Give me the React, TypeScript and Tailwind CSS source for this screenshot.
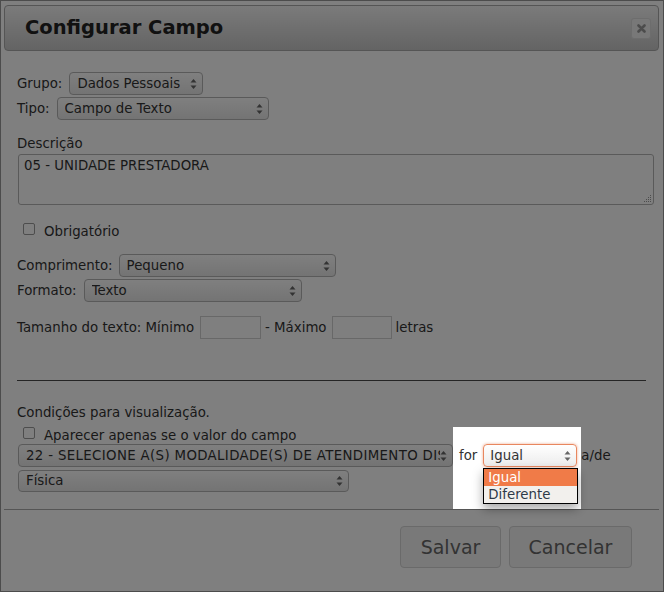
import React from "react";

function Arrows() {
  return (
    <svg width="7" height="12" viewBox="0 0 7 12" className="shrink-0">
      <path d="M0.5 4.5 L3.5 1 L6.5 4.5 Z" fill="#666" />
      <path d="M0.5 7.5 L3.5 11 L6.5 7.5 Z" fill="#666" />
    </svg>
  );
}

function Sel({
  text,
  className,
  textClass = "",
}: {
  text: string;
  className: string;
  textClass?: string;
}) {
  return (
    <div
      className={
        "flex items-center justify-between rounded-[4px] border border-[#b4b4b4] bg-gradient-to-b from-[#ffffff] to-[#e8e8e8] pl-[7px] pr-[5px] overflow-hidden whitespace-nowrap " +
        className
      }
    >
      <span className={"overflow-hidden " + textClass}>{text}</span>
      <Arrows />
    </div>
  );
}

function Check() {
  return (
    <div className="w-[12px] h-[12px] shrink-0 rounded-[2px] border border-[#9a9a9a] bg-white" />
  );
}

export default function App() {
  return (
    <div className="relative w-[664px] h-[592px] overflow-hidden bg-white font-['DejaVu_Sans',sans-serif] text-[13.333px] leading-[16px] text-[#333]">
      <div className="h-full border border-[#999] flex flex-col pt-[4px] pl-[3px] pr-[4px]">
        {/* Header */}
        <div className="h-[46px] shrink-0 rounded-[4px] border border-[#aaa] bg-gradient-to-b from-[#f6f6f6] to-[#c8c8c8] flex items-center justify-between pl-[20px] pr-[7px]">
          <span className="text-[19.5px] leading-[24px] font-bold text-[#222]">
            Configurar Campo
          </span>
          <div className="w-[20px] h-[21px] rounded-[3px] bg-[#f0f0f0] border border-[#dadada] flex items-center justify-center">
            <svg width="9" height="9" viewBox="0 0 9 9">
              <path
                d="M1.5 1.5 L7.5 7.5 M7.5 1.5 L1.5 7.5"
                stroke="#999"
                strokeWidth="2.6"
                strokeLinecap="round"
              />
            </svg>
          </div>
        </div>

        {/* Body */}
        <div className="pl-[13px] flex flex-col">
          <div className="mt-[21px] flex items-center">
            <span>Grupo:</span>
            <Sel text="Dados Pessoais" className="ml-[7px] w-[134px] h-[23px]" />
          </div>
          <div className="mt-[2px] flex items-center">
            <span>Tipo:</span>
            <Sel text="Campo de Texto" className="ml-[7px] w-[212px] h-[23px]" />
          </div>

          <div className="mt-[16px]">Descrição</div>
          <div className="mt-[2px] ml-[1px] relative w-[636px] h-[51px] rounded-[3px] border border-[#b4b4b4] bg-white px-[5px] pt-[3px]">
            05 - UNIDADE PRESTADORA
            <svg
              width="9"
              height="9"
              viewBox="0 0 9 9"
              className="absolute right-[1px] bottom-[1px]"
            >
              <g fill="#999">
                <rect x="7" y="1" width="1" height="1" />
                <rect x="5" y="3" width="1" height="1" />
                <rect x="7" y="3" width="1" height="1" />
                <rect x="3" y="5" width="1" height="1" />
                <rect x="5" y="5" width="1" height="1" />
                <rect x="7" y="5" width="1" height="1" />
                <rect x="1" y="7" width="1" height="1" />
                <rect x="3" y="7" width="1" height="1" />
                <rect x="5" y="7" width="1" height="1" />
                <rect x="7" y="7" width="1" height="1" />
              </g>
            </svg>
          </div>

          <div className="mt-[18px] ml-[6px] flex items-start">
            <Check />
            <span className="ml-[9px] mt-[1px]">Obrigatório</span>
          </div>

          <div className="mt-[14px] flex items-center">
            <span>Comprimento:</span>
            <Sel text="Pequeno" className="ml-[6px] w-[217px] h-[23px]" />
          </div>
          <div className="mt-[2px] flex items-center">
            <span>Formato:</span>
            <Sel text="Texto" className="ml-[7px] w-[218px] h-[23px]" />
          </div>

          <div className="mt-[14px] flex items-center">
            <span>Tamanho do texto: Mínimo</span>
            <div className="ml-[6px] w-[61px] h-[23px] border border-[#d0d0d0] bg-white" />
            <span className="ml-[4px]">- Máximo</span>
            <div className="ml-[5px] w-[60px] h-[23px] border border-[#d0d0d0] bg-white" />
            <span className="ml-[4px]">letras</span>
          </div>

          <div className="mt-[41px] w-[629px] h-[1px] bg-[#4a4a4a]" />

          <div className="mt-[24px]">Condições para visualização.</div>
          <div className="mt-[6px] ml-[6px] flex items-start h-[17px]">
            <Check />
            <span className="ml-[9px] mt-[1px]">
              Aparecer apenas se o valor do campo
            </span>
          </div>

          <div className="flex items-center">
            <Sel
              text="22 - SELECIONE A(S) MODALIDADE(S) DE ATENDIMENTO DISPONÍVEIS"
              className="ml-[1px] w-[435px] h-[23px]"
              textClass="tracking-[0.35px]"
            />
            <span className="ml-[6px]">for</span>
            <div className="relative ml-[6px]">
              <div className="flex items-center justify-between w-[94px] h-[23px] rounded-[4px] border border-[#e8875f] shadow-[0_0_3px_rgba(232,135,95,0.7)] bg-gradient-to-b from-[#ffffff] to-[#ececec] pl-[6px] pr-[5px]">
                <span>Igual</span>
                <Arrows />
              </div>
              <div className="absolute left-0 top-[24px] z-20 w-[95px] border border-black bg-[#f2f0ed] shadow-[0_5px_10px_rgba(0,0,0,0.35)]">
                <div className="h-[17px] bg-[#f07b48] text-white pl-[4px] leading-[17px]">
                  Igual
                </div>
                <div className="h-[17px] text-[#2e3a48] pl-[4px] leading-[17px]">
                  Diferente
                </div>
              </div>
            </div>
            <span className="ml-[4px]">a/de</span>
          </div>
          <Sel text="Física" className="mt-[3px] ml-[1px] w-[331px] h-[22px]" />
        </div>

        <div className="mt-[17px] h-[1px] bg-[#aaa]" />

        <div className="mt-[16px] flex justify-end gap-[8px] pr-[27px]">
          <button className="w-[101px] h-[42px] rounded-[4px] border border-[#d4d4d4] bg-[#f2f2f2] text-[19px] text-[#666]">
            Salvar
          </button>
          <button className="w-[123px] h-[42px] rounded-[4px] border border-[#d4d4d4] bg-[#f2f2f2] text-[19px] text-[#666]">
            Cancelar
          </button>
        </div>
      </div>

      {/* Spotlight overlay */}
      <div className="absolute left-[453px] top-[427px] w-[128px] h-[82px] z-30 pointer-events-none shadow-[0_0_0_2000px_rgba(0,0,0,0.5)]" />
    </div>
  );
}
